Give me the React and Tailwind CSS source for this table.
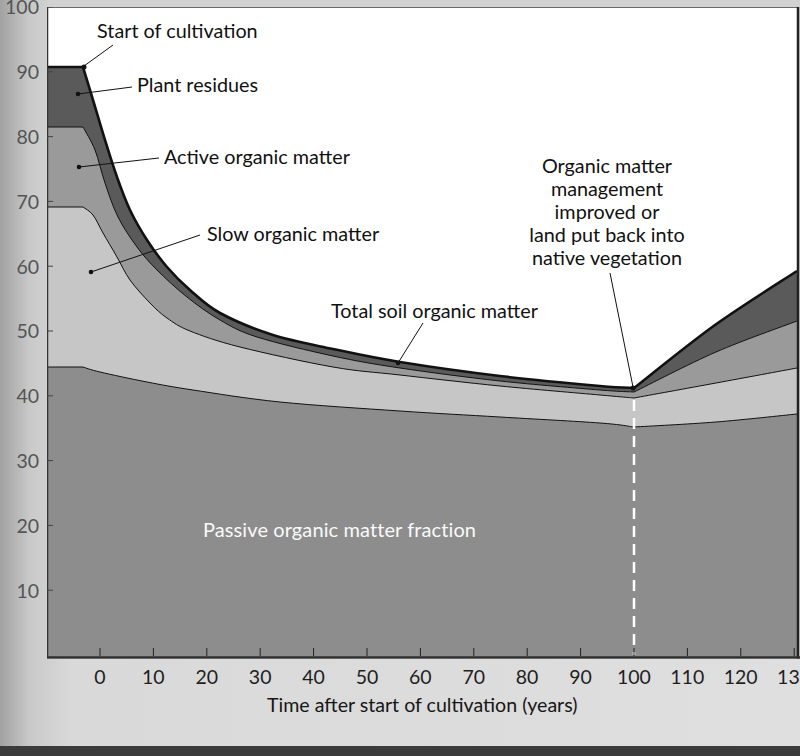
import React from "react";

// curve points in page pixels (chart is drawn 1:1 with the page)
const LAYERS = [
  {
    name: "total",
    flat: 67,
    fall: [[83,67],[93,100],[105,140],[117,177],[130,210],[147,240],[167,267],[190,290],[220,313],[273,335],[333,349],[400,362],[500,376],[600,386],[634,388]],
    rise: [[634,388],[715,325],[797,271]],
    fill: "#5a5a5a",
    width: 2.6,
  },
  {
    name: "active",
    flat: 127,
    fall: [[83,127],[95,150],[105,183],[118,217],[137,247],[157,270],[187,297],[220,320],[257,337],[333,356],[400,368],[500,381],[600,390],[634,392]],
    rise: [[634,392],[716,352],[797,321]],
    fill: "#9a9a9a",
    width: 1,
  },
  {
    name: "slow",
    flat: 207,
    fall: [[83,207],[93,215],[103,233],[117,257],[130,280],[150,303],[167,318],[190,331],[240,347],[333,367],[400,375],[500,386],[600,395],[634,398]],
    rise: [[634,398],[716,383],[797,368]],
    fill: "#c6c6c6",
    width: 1,
  },
  {
    name: "passive",
    flat: 367,
    fall: [[83,367],[100,372],[147,382],[193,390],[280,402],[400,411],[500,417],[600,423],[634,427]],
    rise: [[634,427],[716,422],[797,414]],
    fill: "#8d8d8d",
    width: 1,
  },
];

const smooth = (pts) => {
  let d = "";
  for (let i = 0; i < pts.length - 1; i++) {
    const p0 = pts[i - 1] || pts[i];
    const p1 = pts[i];
    const p2 = pts[i + 1];
    const p3 = pts[i + 2] || p2;
    const c1x = p1[0] + (p2[0] - p0[0]) / 6;
    const c1y = p1[1] + (p2[1] - p0[1]) / 6;
    const c2x = p2[0] - (p3[0] - p1[0]) / 6;
    const c2y = p2[1] - (p3[1] - p1[1]) / 6;
    d += ` C${c1x},${c1y} ${c2x},${c2y} ${p2[0]},${p2[1]}`;
  }
  return d;
};

const linePath = (l) =>
  `M47,${l.flat} L83,${l.flat}` + smooth(l.fall) + smooth(l.rise);

const areaPath = (l) => `M47,657 L47,${l.flat} L83,${l.flat}` + smooth(l.fall) + smooth(l.rise) + " L797,657 Z";

const Y_LABELS = [100, 90, 80, 70, 60, 50, 40, 30, 20, 10];
const X_LABELS = [0, 10, 20, 30, 40, 50, 60, 70, 80, 90, 100, 110, 120, 130];

const FONT = { fontFamily: "Lato, 'Open Sans', 'Liberation Sans', sans-serif" };

const Chart = () => (
  <svg width="753" height="652" viewBox="47 7 753 652" className="block">
    <rect x="47" y="7" width="750" height="650" fill="#ffffff" />
    {LAYERS.map((l) => (
      <path key={l.name} d={areaPath(l)} fill={l.fill} />
    ))}
    {LAYERS.map((l) => (
      <path key={l.name + "-line"} d={linePath(l)} fill="none" stroke="#111" strokeWidth={l.width} />
    ))}

    {/* management change marker */}
    <line x1="634" y1="400" x2="634" y2="655" stroke="#fff" strokeWidth="2.5" strokeDasharray="11 7" />

    {/* frame */}
    <line x1="47" y1="7" x2="797" y2="7" stroke="#3a3a3a" strokeWidth="1.5" />
    <line x1="47.5" y1="7" x2="47.5" y2="657" stroke="#333" strokeWidth="1.5" />
    <line x1="798" y1="7" x2="798" y2="659" stroke="#222" strokeWidth="2.5" />
    <line x1="47" y1="657.5" x2="800" y2="657.5" stroke="#2f2f2f" strokeWidth="2.5" />
    <line x1="47" y1="659.5" x2="800" y2="659.5" stroke="#8a8a8a" strokeWidth="1.5" />
    {Y_LABELS.map((v) => (
      <line key={v} x1="47" x2="53" y1={655 - v * 6.48} y2={655 - v * 6.48} stroke="#444" strokeWidth="1" />
    ))}
    {X_LABELS.map((v) => (
      <line key={v} x1={100 + v * 5.34} x2={100 + v * 5.34} y1="648" y2="656" stroke="#222" strokeWidth="1" />
    ))}

    {/* annotations */}
    <g style={FONT} fontSize="19.8" fill="#111">
      <text x="97" y="38">Start of cultivation</text>
      <text x="137" y="92">Plant residues</text>
      <text x="164" y="164">Active organic matter</text>
      <text x="207" y="241">Slow organic matter</text>
      <text x="331" y="318">Total soil organic matter</text>
      <text textAnchor="middle" x="607">
        <tspan x="607" y="173">Organic matter</tspan>
        <tspan x="607" y="196">management</tspan>
        <tspan x="607" y="219">improved or</tspan>
        <tspan x="607" y="242">land put back into</tspan>
        <tspan x="607" y="265">native vegetation</tspan>
      </text>
      <text x="203" y="537" fill="#fafafa" fontSize="20" letterSpacing="0.1">
        Passive organic matter fraction
      </text>
    </g>
    <g stroke="#111" strokeWidth="1">
      <line x1="113" y1="45" x2="84" y2="66" />
      <line x1="132" y1="87" x2="78" y2="94" />
      <line x1="159" y1="158" x2="79" y2="167" />
      <line x1="200" y1="235" x2="91" y2="272" />
      <line x1="423" y1="323" x2="398" y2="363" />
      <line x1="610" y1="273" x2="633" y2="387" />
    </g>
    <g fill="#111">
      <circle cx="84" cy="67" r="2.5" />
      <circle cx="78" cy="94" r="2.3" />
      <circle cx="79" cy="167" r="2.3" />
      <circle cx="91" cy="272" r="2.3" />
      <circle cx="398" cy="363" r="2.3" />
      <circle cx="633" cy="388" r="2.5" />
    </g>
  </svg>
);

const App = () => {
  return (
    <div
      className="relative w-[800px] h-[756px] overflow-hidden flex flex-col bg-[linear-gradient(to_right,#a2a2a2_0px,#c9c9c9_30px,#d9d9d9_70px,#dfdfdf_100%)]"
      style={FONT}
    >
      {/* ===== CHART ROW ===== */}
      <div className="flex h-[659px]">
        {/* Y axis labels */}
        <div className="w-[47px] shrink-0 flex flex-col mt-[-25.4px]">
          {Y_LABELS.map((v) => (
            <div key={v} className="h-[64.8px] shrink-0 flex items-center justify-end pr-[8px] text-[19.5px] text-[#545454]">
              {v}
            </div>
          ))}
        </div>

        <div className="flex flex-col">
          <div className="h-[7px] bg-[#d2d2d2]" />
          <Chart />
        </div>
      </div>

      {/* X axis labels */}
      <div className="flex pl-[73.3px] h-[36px] items-center">
        {X_LABELS.map((v) => (
          <div key={v} className="w-[53.4px] shrink-0 text-center text-[19.5px] text-[#1e1e1e]">
            {v}
          </div>
        ))}
      </div>

      {/* Axis title */}
      <div className="pl-[267px] text-[19.6px] text-[#161616] leading-none">
        Time after start of cultivation (years)
      </div>

      <div className="flex-1" />
      {/* page edge */}
      <div className="h-[10px] bg-[#3b3b3b]" />
    </div>
  );
};

export default App;
